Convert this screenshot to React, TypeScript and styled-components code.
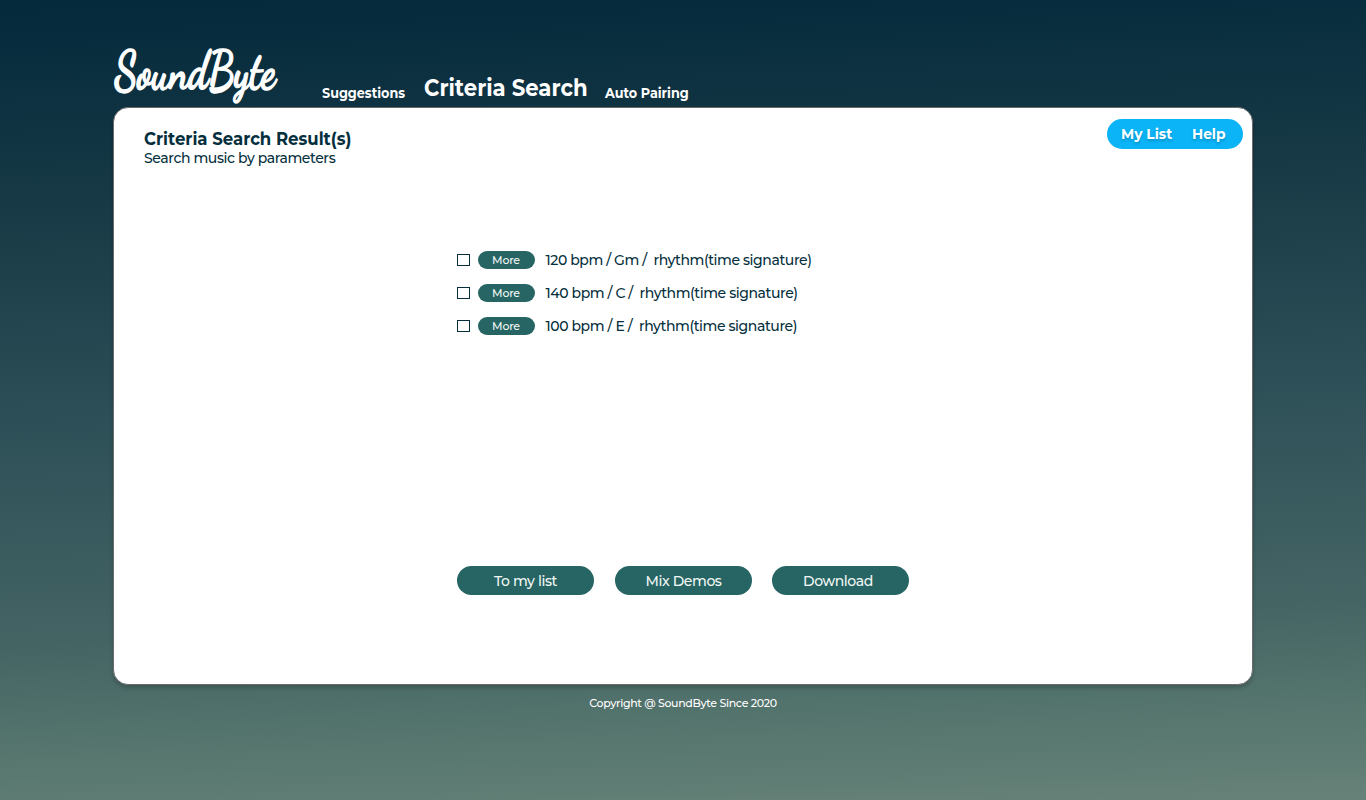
import React from "react";
import styled, { createGlobalStyle } from "styled-components";

const Global = createGlobalStyle`
  *, *::before, *::after { box-sizing: border-box; }
  body { margin: 0; font-family: Montserrat, Inter, "Liberation Sans", sans-serif; color: #052f3d; }
  button { font: inherit; border: 0; padding: 0; cursor: pointer; }
`;

const Page = styled.div`
  height: 800px;
  overflow: hidden;
  background: linear-gradient(
    178deg,
    #03293b 0%,
    #183a46 25%,
    #2d4f57 50%,
    #446464 76%,
    #57776f 90%,
    #678279 100%
  );
`;

const Container = styled.div`
  width: 1140px;
  margin: 0 auto;
`;

const Header = styled.header`
  height: 107px;
  display: flex;
  align-items: flex-end;
`;

const Logo = styled.svg`
  display: block;
  width: 200px;
  height: 70px;
  flex: none;
  overflow: visible;
`;

const LogoText = styled.text`
  font-family: "Dancing Script", "Liberation Serif", cursive;
  font-weight: 700;
  fill: #fff;
  stroke: #fff;
  stroke-width: 1.4px;
  stroke-linejoin: round;
`;

const Nav = styled.nav`
  display: flex;
  align-items: flex-end;
  padding: 0 0 4px 9px;
`;

const NavLink = styled.a<{ $active?: boolean; $w: number }>`
  width: ${(p) => p.$w}px;
  color: #fff;
  font-weight: 700;
  white-space: nowrap;
  font-size: ${(p) => (p.$active ? 24 : 14)}px;
  line-height: ${(p) => (p.$active ? 30 : 20)}px;
  transform: scaleX(${(p) => (p.$active ? 0.885 : 0.912)});
  transform-origin: 0 50%;
`;

const Card = styled.main`
  height: 578px;
  display: flex;
  flex-direction: column;
  background: #fff;
  border: 1px solid #6b6b6b;
  border-radius: 15px;
  box-shadow: 0 3px 4px rgba(0, 0, 0, 0.2);
`;

const CardTop = styled.div`
  height: 143px;
  flex: none;
  display: flex;
  justify-content: space-between;
  padding: 11px 9px 0 30px;
`;

const Title = styled.h1`
  margin: 10px 0 0;
  font-size: 18px;
  line-height: 20px;
  font-weight: 700;
  transform: scaleX(0.918);
  transform-origin: 0 50%;
`;

const Subtitle = styled.p`
  margin: 0;
  font-size: 14px;
  line-height: 18px;
  font-weight: 500;
  letter-spacing: -0.4px;
`;

const Pill = styled.div`
  width: 136px;
  height: 30px;
  display: flex;
  gap: 15px;
  padding-left: 14px;
  border-radius: 15px;
  background: #0ab4f7;
`;

const PillLink = styled.a`
  color: #fff;
  font-size: 15px;
  font-weight: 700;
  line-height: 30px;
  white-space: nowrap;
  transform: scaleX(0.92);
  transform-origin: 0 50%;
  text-shadow: 0 2px 3px rgba(0, 0, 0, 0.2);
`;

const Results = styled.ul`
  list-style: none;
  margin: 0;
  padding: 0 0 0 343px;
  display: flex;
  flex-direction: column;
  gap: 15px;
`;

const Result = styled.li`
  height: 18px;
  display: flex;
  align-items: center;
`;

const Checkbox = styled.input`
  appearance: none;
  width: 13px;
  height: 12px;
  margin: 0 7.5px 0 0;
  border: 1px solid #052f3d;
  background: #fff;
`;

const MoreButton = styled.button`
  width: 57px;
  height: 18px;
  border-radius: 9px;
  background: #266563;
  color: #f2f7f6;
  font-size: 11px;
  font-weight: 500;
  line-height: 18px;
  letter-spacing: -0.2px;
`;

const ResultText = styled.span`
  margin-left: 11px;
  font-size: 14px;
  font-weight: 500;
  line-height: 18px;
  white-space: pre;
  letter-spacing: -0.41px;
`;

const Actions = styled.div`
  display: flex;
  gap: 20.5px;
  margin-top: 231px;
  padding-left: 343px;
`;

const Action = styled.button<{ $shift?: number }>`
  width: 137px;
  height: 29px;
  padding: 1px ${(p) => Math.max(p.$shift ?? 0, 0)}px 0 ${(p) => Math.max(-(p.$shift ?? 0), 0)}px;
  border-radius: 14.5px;
  background: #266563;
  color: #f2f7f6;
  font-size: 14px;
  font-weight: 500;
  line-height: 28px;
  letter-spacing: -0.4px;
`;

const Footer = styled.footer`
  padding-top: 10px;
  text-align: center;
  color: #fff;
  font-size: 11px;
  font-weight: 500;
  line-height: 16px;
  letter-spacing: -0.33px;
`;

const results = [
  "120 bpm / Gm /  rhythm(time signature)",
  "140 bpm / C /  rhythm(time signature)",
  "100 bpm / E /  rhythm(time signature)",
];

export default function App() {
  return (
    <>
      <Global />
      <Page>
        <Container>
          <Header>
            <Logo viewBox="0 0 200 70" aria-label="SoundByte">
              <LogoText
                x="1.5"
                y="47"
                fontSize="49"
                textLength="161"
                lengthAdjust="spacingAndGlyphs"
                transform="scale(1 1.08)"
              >
                SoundByte
              </LogoText>
            </Logo>
            <Nav>
              <NavLink $w={102}>Suggestions</NavLink>
              <NavLink $active $w={181}>Criteria Search</NavLink>
              <NavLink $w={90}>Auto Pairing</NavLink>
            </Nav>
          </Header>
          <Card>
            <CardTop>
              <div>
                <Title>Criteria Search Result(s)</Title>
                <Subtitle>Search music by parameters</Subtitle>
              </div>
              <Pill>
                <PillLink>My List</PillLink>
                <PillLink>Help</PillLink>
              </Pill>
            </CardTop>
            <Results>
              {results.map((text) => (
                <Result key={text}>
                  <Checkbox type="checkbox" />
                  <MoreButton>More</MoreButton>
                  <ResultText>{text}</ResultText>
                </Result>
              ))}
            </Results>
            <Actions>
              <Action>To my list</Action>
              <Action $shift={-1}>Mix Demos</Action>
              <Action $shift={5}>Download</Action>
            </Actions>
          </Card>
          <Footer>Copyright @ SoundByte Since 2020</Footer>
        </Container>
      </Page>
    </>
  );
}
